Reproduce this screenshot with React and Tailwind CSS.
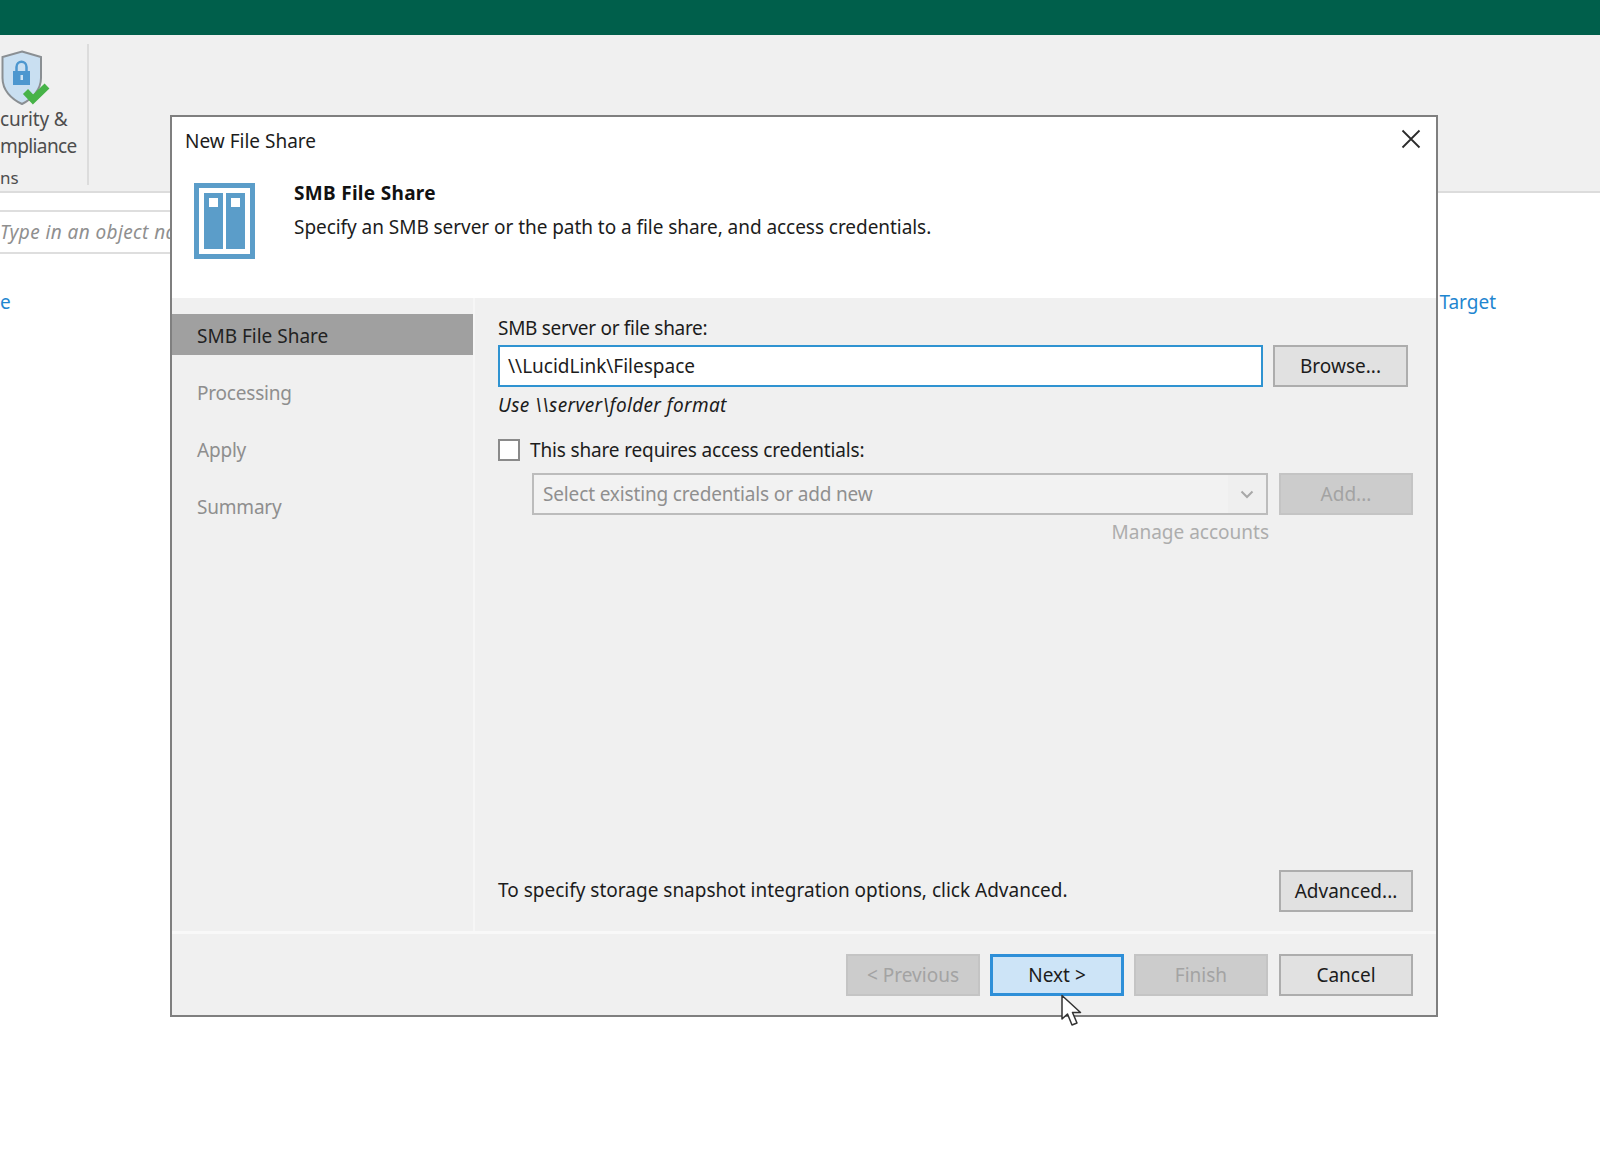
import React from 'react';

const Btn = ({ children, kind = 'normal', className = '' }) => {
  const styles = {
    normal: 'bg-[#e1e1e1] border-[#adadad] text-[#1c1c1c]',
    disabled: 'bg-[#cccccc] border-[#c4c4c4] text-[#a3a3a3]',
    active: 'bg-[#cde4f7] border-[#2e8fd8] border-[3px] text-[#1c1c1c]',
  };
  return (
    <div className={`w-[134px] h-[42px] shrink-0 flex items-center justify-center border-2 ${styles[kind]} ${className}`}>
      {children}
    </div>
  );
};

const ShieldIcon = () => (
  <svg width="50" height="56" viewBox="0 0 50 56">
    <path d="M22 1.5 L41 7 V28 C41 40 32 49 22 54 C11 49 2.5 40 2.5 28 V7 Z" fill="#c9dff1" stroke="#8a8f93" strokeWidth="2" />
    <rect x="13" y="21" width="17" height="14" fill="#4d97cf" />
    <path d="M16.5 21 V17 C16.5 10 26.5 10 26.5 17 V21" fill="none" stroke="#4d97cf" strokeWidth="2.5" />
    <rect x="20.5" y="25" width="2.5" height="5" fill="#cfe3f2" />
    <path d="M25.5 41.5 L33 49.5 L47 36" fill="none" stroke="#47b348" strokeWidth="7" />
  </svg>
);

const ShareIcon = () => (
  <svg width="61" height="76" viewBox="0 0 61 76" className="shrink-0">
    <rect width="61" height="76" fill="#5b9dc9" />
    <rect x="5" y="5" width="51" height="66" fill="#ffffff" />
    <rect x="10" y="10" width="19" height="56" fill="#5b9dc9" />
    <rect x="32" y="10" width="19" height="56" fill="#5b9dc9" />
    <rect x="15" y="15" width="9" height="9" fill="#ffffff" />
    <rect x="37" y="15" width="9" height="9" fill="#ffffff" />
  </svg>
);

const steps = ['SMB File Share', 'Processing', 'Apply', 'Summary'];

const App = () => {
  return (
    <div className="relative w-[1600px] h-[1154px] overflow-hidden bg-white font-['Noto_Sans',sans-serif] text-[19px] text-[#1c1c1c]">
      <div className="h-[35px] bg-[#005f4b]" />

      {/* ribbon */}
      <div className="h-[158px] bg-[#f0f0f0] border-b-2 border-[#dcdcdc] pt-[9px]">
        <div className="w-[89px] h-[141px] border-r-2 border-[#dcdcdc] flex flex-col text-[#4d4d4d] leading-[27px]">
          <div className="h-[58px] pt-[6px]"><ShieldIcon /></div>
          <div className="whitespace-nowrap pt-[4px] tracking-[-0.2px]">curity &amp;</div>
          <div className="whitespace-nowrap tracking-[-0.6px]">mpliance</div>
          <div className="whitespace-nowrap pt-[4px] text-[17px]">ns</div>
        </div>
      </div>

      {/* search */}
      <div className="mt-[17px] h-[44px] w-[200px] border-y-2 border-[#dedede] flex items-center overflow-hidden italic text-[#8f8f8f] whitespace-nowrap tracking-[0.4px]">
        Type in an object name
      </div>

      {/* links behind the dialog */}
      <div className="mt-[35px] flex justify-between pr-[104px] text-[#1f86d0] leading-[26px]">
        <span>e</span>
        <span>Target</span>
      </div>

      {/* dialog */}
      <div className="absolute left-[170px] top-[115px] w-[1268px] h-[902px] border-2 border-[#7f7f7f] bg-white flex flex-col">
        <div className="h-[181px] shrink-0 relative pl-[13px]">
          <div className="h-[50px] pt-[11px] leading-[26px]">New File Share</div>
          <div className="flex mt-[16px] pl-[9px] gap-[39px]">
            <ShareIcon />
            <div className="-mt-[3px] leading-[26px]">
              <div className="font-bold text-[#111111] tracking-[0.3px]">SMB File Share</div>
              <div className="mt-[8px] whitespace-nowrap tracking-[-0.05px]">Specify an SMB server or the path to a file share, and access credentials.</div>
            </div>
          </div>
          <svg width="20" height="20" viewBox="0 0 20 20" className="absolute left-[1229px] top-[12px]">
            <path d="M1.5 1.5 L18.5 18.5 M18.5 1.5 L1.5 18.5" stroke="#2b2b2b" strokeWidth="1.8" />
          </svg>
        </div>

        <div className="flex-1 flex bg-[#f0f0f0] min-h-0">
          <div className="w-[303px] shrink-0 border-r-2 border-[#f6f6f6] pt-[16px]">
            {steps.map((s, i) => (
              <div
                key={s}
                className={`h-[41px] mb-[16px] pl-[25px] pt-[4px] flex items-center ${i === 0 ? 'bg-[#a0a0a0] text-[#222222]' : 'text-[#8e8e8e] tracking-[-0.2px]'}`}
              >
                {s}
              </div>
            ))}
          </div>

          <div className="flex-1 pl-[23px] pr-[23px] pt-[18px] pb-[19px] flex flex-col">
            <div className="h-[24px] leading-[24px] tracking-[-0.3px]">SMB server or file share:</div>
            <div className="flex gap-[10px] mt-[5px]">
              <div className="w-[765px] h-[42px] bg-white border-2 border-[#2f93d1] pl-[8px] pt-[1px] flex items-center">\\LucidLink\Filespace</div>
              <Btn className="w-[135px] pt-[1px]">Browse...</Btn>
            </div>
            <div className="h-[24px] leading-[24px] mt-[6px] italic tracking-[0.35px]">Use \\server\folder format</div>
            <div className="flex items-center gap-[10px] mt-[22px] h-[22px]">
              <div className="w-[22px] h-[22px] bg-white border-2 border-[#8a8a8a]" />
              <span className="tracking-[-0.15px]">This share requires access credentials:</span>
            </div>
            <div className="flex gap-[11px] mt-[12px] ml-[34px]">
              <div className="w-[736px] h-[42px] bg-[#f2f2f2] border-2 border-[#bcbcbc] flex items-center">
                <span className="flex-1 pl-[9px] text-[#8f8f8f] tracking-[-0.15px]">Select existing credentials or add new</span>
                <div className="w-[38px] h-full bg-[#efefef] flex items-center justify-center">
                  <svg width="14" height="9" viewBox="0 0 14 9">
                    <path d="M1.5 1.5 L7 7 L12.5 1.5" fill="none" stroke="#a8a8a8" strokeWidth="2" />
                  </svg>
                </div>
              </div>
              <Btn kind="disabled">Add...</Btn>
            </div>
            <div className="w-[771px] text-right h-[24px] leading-[24px] mt-[5px] text-[#adadad]">Manage accounts</div>

            <div className="mt-auto flex items-center justify-between">
              <span className="-mt-[1px]">To specify storage snapshot integration options, click Advanced.</span>
              <Btn>Advanced...</Btn>
            </div>
          </div>
        </div>

        <div className="h-[84px] shrink-0 bg-[#f0f0f0] border-t-[3px] border-[#f8f8f8] pt-[20px] pr-[23px] flex justify-end gap-[10px]">
          <Btn kind="disabled">&lt; Previous</Btn>
          <Btn kind="active">Next &gt;</Btn>
          <Btn kind="disabled">Finish</Btn>
          <Btn className="ml-[1px]">Cancel</Btn>
        </div>
      </div>

      {/* mouse pointer */}
      <svg width="24" height="34" viewBox="0 0 24 34" className="absolute left-[1060px] top-[994px]">
        <path d="M2 1.5 V25 L7.5 20 L12 31 L17 29 L12.5 18.5 L20.5 18.5 Z" fill="#ffffff" stroke="#333333" strokeWidth="1.5" strokeLinejoin="round" />
      </svg>
    </div>
  );
};

export default App;
